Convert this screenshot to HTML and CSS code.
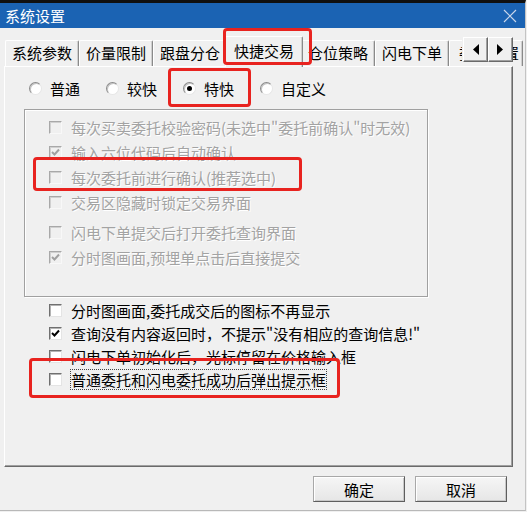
FILE: index.html
```html
<!DOCTYPE html>
<html lang="zh-CN">
<head>
  <meta charset="UTF-8">
  <title>系统设置</title>
  <link rel="stylesheet" href="styles.css">
</head>
<body>
  <div class="window">

    <div class="titlebar">
      <span>系统设置</span>
      <svg class="close" width="14" height="14" viewBox="0 0 14 14">
        <path d="M1 1 L13 13 M13 1 L1 13" stroke="#c9d6ea" stroke-width="1.2" fill="none"/>
      </svg>
    </div>

    <div class="tabbar">
      <div class="tabs">
        <div class="tab">系统参数</div>
        <div class="tab">价量限制</div>
        <div class="tab">跟盘分仓</div>
        <div class="tab active mark mark-tab">快捷交易</div>
        <div class="tab">仓位策略</div>
        <div class="tab">闪电下单</div>
        <div class="tab tabCut">委托设置</div>
      </div>
      <div class="tabArrows">
        <span class="arrowBtn">
          <svg width="7" height="11" viewBox="0 0 7 11"><polygon points="7,0 7,11 1,5.5" fill="#000"/></svg>
        </span>
        <span class="arrowBtn">
          <svg width="7" height="11" viewBox="0 0 7 11"><polygon points="0,0 0,11 6,5.5" fill="#000"/></svg>
        </span>
      </div>
    </div>

    <div class="panel">
      <div class="speed">
        <label class="radio"><span class="dot"></span>普通</label>
        <label class="radio"><span class="dot"></span>较快</label>
        <label class="radio mark mark-radio"><span class="dot on"></span>特快</label>
        <label class="radio"><span class="dot"></span>自定义</label>
      </div>

      <div class="group">
        <div class="check off"><span class="cb"></span>每次买卖委托校验密码(未选中"委托前确认"时无效)</div>
        <div class="check off"><span class="cb"><svg width="11" height="11" viewBox="0 0 11 11"><path d="M2 5 L4.5 7.5 L9 2.5" stroke="#a0a0a0" stroke-width="2" fill="none"/></svg></span>输入六位代码后自动确认</div>
        <div class="check off mark mark-row"><span class="cb"></span>每次委托前进行确认(推荐选中)</div>
        <div class="check off"><span class="cb"></span>交易区隐藏时锁定交易界面</div>
        <div class="check off gapTop"><span class="cb"></span>闪电下单提交后打开委托查询界面</div>
        <div class="check off"><span class="cb"><svg width="11" height="11" viewBox="0 0 11 11"><path d="M2 5 L4.5 7.5 L9 2.5" stroke="#a0a0a0" stroke-width="2" fill="none"/></svg></span>分时图画面,预埋单点击后直接提交</div>
      </div>

      <div class="opts">
        <div class="check"><span class="cb"></span>分时图画面,委托成交后的图标不再显示</div>
        <div class="check"><span class="cb"><svg width="11" height="11" viewBox="0 0 11 11"><path d="M2 5 L4.5 7.5 L9 2.5" stroke="#000" stroke-width="2" fill="none"/></svg></span>查询没有内容返回时，不提示"没有相应的查询信息!"</div>
        <div class="check"><span class="cb"></span>闪电下单初始化后，光标停留在价格输入框</div>
        <div class="check mark mark-last"><span class="cb"></span><span class="focus">普通委托和闪电委托成功后弹出提示框</span></div>
      </div>
    </div>

    <div class="actions">
      <button class="btn">确定</button>
      <button class="btn">取消</button>
    </div>

  </div>
</body>
</html>
```

FILE: styles.css
```css
body {
  margin: 0;
  width: 527px;
  height: 512px;
  overflow: hidden;
  background: #f0f0f0;
  font-family: "Noto Sans CJK SC", "Liberation Sans", sans-serif;
  font-size: 15px;
  color: #000;
}
.window {
  box-sizing: border-box;
  width: 526px;
  height: 511px;
  border-top: 3px solid #101010;
  border-right: 1px solid #c4c4c4;
  border-bottom: 1px solid #b8b8b8;
}
.titlebar {
  height: 25px;
  background: #1b63b3;
  color: #fff;
  display: flex;
  align-items: center;
  justify-content: space-between;
  padding: 0 8px 0 5px;
}
.titlebar span {
  line-height: 25px;
}
.tabbar {
  display: flex;
  align-items: flex-end;
  height: 39px;
  margin-bottom: -1px;
  padding-left: 5px;
  position: relative;
  z-index: 1;
}
.tabs {
  display: flex;
  align-items: flex-end;
  width: 457px;
  height: 39px;
}
.tab {
  flex: none;
  box-sizing: border-box;
  width: 74px;
  height: 26px;
  margin-bottom: 1px;
  line-height: 24px;
  text-align: center;
  white-space: nowrap;
  border-top: 1px solid #fff;
  border-left: 1px solid #fff;
  border-right: 1px solid #8a8a8a;
  box-shadow: inset -1px 0 #cfcfcf;
  border-radius: 2px 2px 0 0;
}
.tab.tabCut {
  text-align: left;
  padding-left: 9px;
}
.tab.active {
  width: 78px;
  height: 31px;
  margin: 0 -2px;
  line-height: 28px;
  background: #f0f0f0;
  position: relative;
  z-index: 1;
}
.tabArrows {
  display: flex;
  margin-bottom: 5px;
  padding-left: 1px;
  background: #f0f0f0;
  position: relative;
  z-index: 2;
}
.arrowBtn {
  box-sizing: border-box;
  width: 25px;
  height: 25px;
  display: flex;
  align-items: center;
  justify-content: center;
  border: 1px solid;
  border-color: #fff #6a6a6a #6a6a6a #fff;
  box-shadow: inset -1px -1px #a0a0a0;
  background: #f0f0f0;
}
.panel {
  box-sizing: border-box;
  width: 509px;
  height: 401px;
  margin-left: 4px;
  padding: 9px 0 0 19px;
  border: 1px solid;
  border-color: #fff #6a6a6a #6a6a6a #fff;
  box-shadow: inset -1px -1px #a0a0a0;
}
.speed {
  display: flex;
  height: 24px;
  padding-left: 5px;
}
.radio {
  width: 77px;
  display: flex;
  align-items: center;
  gap: 8px;
}
.dot {
  box-sizing: border-box;
  width: 13px;
  height: 13px;
  border-radius: 50%;
  border: 1px solid;
  border-color: #8a8a8a #e6e6e6 #e6e6e6 #8a8a8a;
  box-shadow: inset 1px 1px #c4c4c4;
  background: #fff;
  display: flex;
  align-items: center;
  justify-content: center;
}
.dot.on::before {
  content: "";
  width: 5px;
  height: 5px;
  border-radius: 50%;
  background: #000;
}
.group {
  box-sizing: border-box;
  width: 404px;
  height: 188px;
  margin-top: 9px;
  padding: 5px 0 0 24px;
  border: 1px solid #a0a0a0;
  box-shadow: 1px 1px 0 #fff, inset 1px 1px 0 #fff;
}
.check {
  display: flex;
  align-items: center;
  gap: 9px;
  height: 25px;
  white-space: nowrap;
}
.gapTop {
  margin-top: 5px;
}
.cb {
  box-sizing: border-box;
  flex: none;
  width: 13px;
  height: 13px;
  border: 1px solid;
  border-color: #707070 #e4e4e4 #e4e4e4 #707070;
  box-shadow: inset 1px 1px #b4b4b4;
  background: #fff;
  display: flex;
  align-items: center;
  justify-content: center;
}
.check.off {
  color: #a3a3a3;
  text-shadow: 1px 1px 0 #fff;
}
.check.off .cb {
  border-color: #a8a8a8 #f8f8f8 #f8f8f8 #a8a8a8;
  box-shadow: inset 1px 1px #d0d0d0;
  background: #f0f0f0;
}
.opts {
  margin-top: 2px;
  padding-left: 25px;
}
.opts .check {
  height: 23px;
}
.focus {
  outline: 1px dotted #444;
  outline-offset: 0;
  line-height: 19px;
}
.actions {
  display: flex;
  justify-content: flex-end;
  gap: 10px;
  padding: 9px 18px 0 0;
}
.btn {
  box-sizing: border-box;
  width: 92px;
  height: 26px;
  padding: 0;
  font-family: inherit;
  font-size: 15px;
  color: #000;
  border: 1px solid;
  border-color: #a8a8a8 #5e5e5e #5e5e5e #a8a8a8;
  box-shadow: inset 1px 1px #fff, inset -1px -1px #c8c8c8;
  background: linear-gradient(#f6f6f6, #e6e6e6);
}

/* red highlight boxes from the screenshot */
.mark {
  position: relative;
}
.mark::after {
  content: "";
  position: absolute;
  border: 3px solid #e8231f;
  border-radius: 4px;
  pointer-events: none;
}
.mark-tab::after {
  left: -3px;
  right: -10px;
  top: -9px;
  bottom: 2px;
}
.mark-radio::after {
  left: -15px;
  right: 9px;
  top: -8px;
  bottom: -7px;
}
.mark-row::after {
  left: -16px;
  right: 125px;
  top: -8px;
  bottom: -1px;
}
.mark-last::after {
  left: -20px;
  right: 172px;
  top: -10px;
  bottom: -7px;
}
```
